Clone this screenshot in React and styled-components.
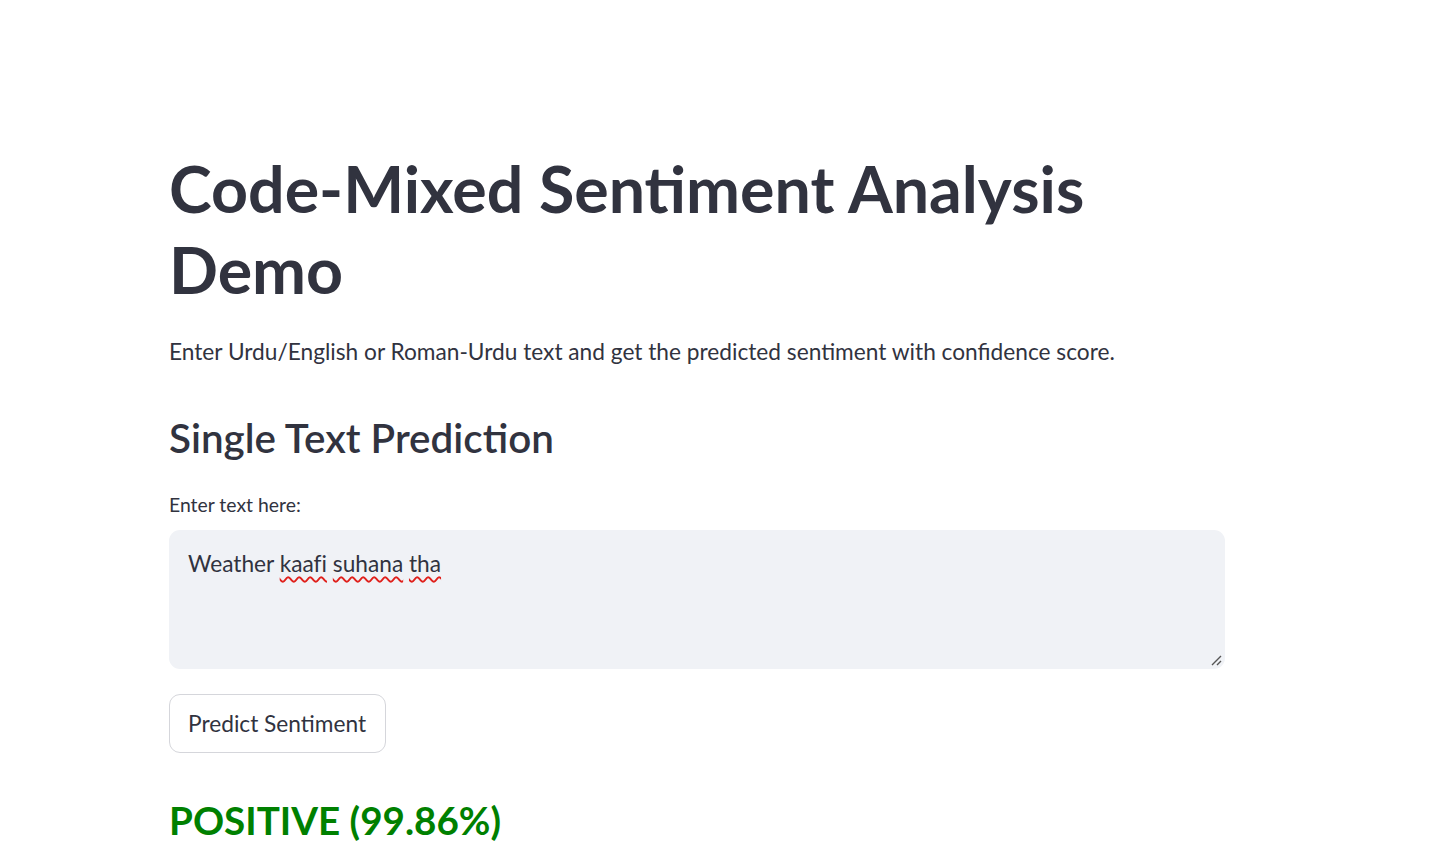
import React from "react";
import styled, { createGlobalStyle } from "styled-components";

const GlobalStyle = createGlobalStyle`
  body {
    margin: 0;
    background: #ffffff;
    font-family: Lato, "Noto Sans", sans-serif;
    color: #31333f;
  }
`;

const Page = styled.main`
  padding: 148px 0 40px 169px;
`;
const Block = styled.div`
  width: 1056px;
  display: flex;
  flex-direction: column;
`;
const Title = styled.h1`
  margin: 0;
  font-size: 64.5px;
  line-height: 81px;
  font-weight: 700;
  color: #31333f;
`;
const Intro = styled.p`
  margin: 24px 0 0;
  font-size: 22.7px;
  line-height: 36px;
`;
const SectionTitle = styled.h2`
  margin: 40px 0 0;
  font-size: 40.4px;
  line-height: 56px;
  font-weight: 600;
`;
const Label = styled.label`
  margin-top: 26px;
  font-size: 19.4px;
  line-height: 26px;
`;
const TextBox = styled.div`
  position: relative;
  margin-top: 12px;
  height: 139px;
  box-sizing: border-box;
  padding: 18px 19px;
  background: #f0f2f6;
  border-radius: 11px;
  font-size: 22.7px;
  line-height: 32px;
  font-variant-ligatures: none;
`;
const Misspelt = styled.span`
  text-decoration: underline wavy #e0201b;
  text-decoration-thickness: 1.5px;
  text-underline-offset: 4px;
`;
const Grip = styled.svg`
  position: absolute;
  right: 3px;
  bottom: 3px;
`;
const Button = styled.button`
  align-self: flex-start;
  margin-top: 25px;
  height: 59px;
  padding: 0 19px 0 18px;
  background: #ffffff;
  border: 1px solid #d5d6db;
  border-radius: 11px;
  font-family: inherit;
  font-size: 22.7px;
  color: #31333f;
  cursor: pointer;
`;
const Result = styled.div`
  margin-top: 40px;
  font-size: 38.6px;
  line-height: 54px;
  font-weight: 700;
  color: #008000;
`;

export default function App() {
  return (
    <>
      <GlobalStyle />
      <Page>
        <Block>
          <Title>Code-Mixed Sentiment Analysis Demo</Title>
          <Intro>
            Enter Urdu/English or Roman-Urdu text and get the predicted
            sentiment with confidence score.
          </Intro>
          <SectionTitle>Single Text Prediction</SectionTitle>
          <Label>Enter text here:</Label>
          <TextBox>
            Weather <Misspelt>kaafi</Misspelt> <Misspelt>suhana</Misspelt>{" "}
            <Misspelt>tha</Misspelt>
            <Grip width="12" height="12" viewBox="0 0 12 12">
              <path d="M2 11 L11 2 M7 11 L11 7" stroke="#555" strokeWidth="1.4" />
            </Grip>
          </TextBox>
          <Button>Predict Sentiment</Button>
          <Result>POSITIVE (99.86%)</Result>
        </Block>
      </Page>
    </>
  );
}
